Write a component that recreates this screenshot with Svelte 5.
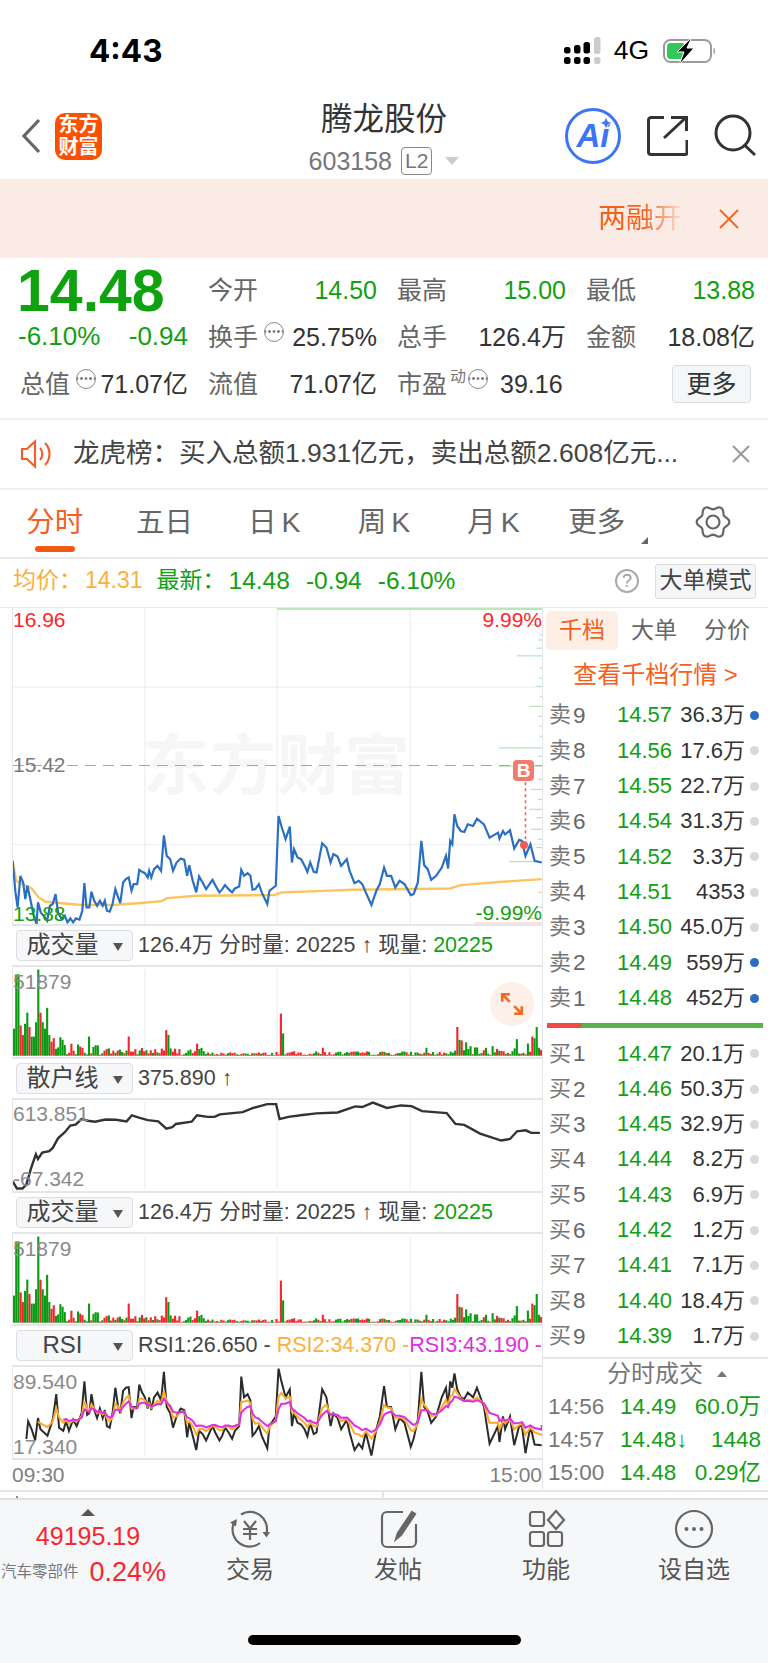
<script>
  // 盘口数据
  const sellRows = [
    ['卖', 9, '14.57', '36.3万', 1], ['卖', 8, '14.56', '17.6万', 0], ['卖', 7, '14.55', '22.7万', 0],
    ['卖', 6, '14.54', '31.3万', 0], ['卖', 5, '14.52', '3.3万', 0], ['卖', 4, '14.51', '4353', 0],
    ['卖', 3, '14.50', '45.0万', 0], ['卖', 2, '14.49', '559万', 1], ['卖', 1, '14.48', '452万', 1]
  ];
  const buyRows = [
    ['买', 1, '14.47', '20.1万', 0], ['买', 2, '14.46', '50.3万', 0], ['买', 3, '14.45', '32.9万', 0],
    ['买', 4, '14.44', '8.2万', 0], ['买', 5, '14.43', '6.9万', 0], ['买', 6, '14.42', '1.2万', 0],
    ['买', 7, '14.41', '7.1万', 0], ['买', 8, '14.40', '18.4万', 0], ['买', 9, '14.39', '1.7万', 0]
  ];
  const trades = [
    ['14:56', '14.49', '60.0万'], ['14:57', '14.48↓', '1448'], ['15:00', '14.48', '0.29亿']
  ];
  const tabs = ['分时', '五日', '日K', '周K', '月K', '更多'];

  // 曲线坐标（x, y 交替）
  const priceLine = [36,785,44,880,50,925,58,830,66,850,72,900,78,860,86,900,96,950,104,975,108,910,116,940,124,950,134,965,142,920,150,915,158,885,165,940,175,960,184,950,192,970,200,958,208,970,216,958,226,962,234,935,240,852,246,925,254,925,260,878,268,905,276,920,284,905,292,920,298,905,304,935,312,938,320,915,328,870,336,895,342,912,350,850,358,840,366,835,374,875,380,855,390,855,396,812,404,818,412,822,420,835,424,815,430,835,438,810,448,800,458,815,466,708,474,770,484,780,492,815,502,790,514,778,524,782,532,830,538,798,548,845,558,880,566,832,576,850,586,870,604,842,612,858,624,880,632,870,640,858,650,870,660,880,668,868,680,862,686,812,694,830,704,822,712,830,718,872,726,870,736,855,744,880,760,915,766,875,784,860,792,650,800,680,812,720,824,682,830,790,836,750,846,775,856,780,866,800,874,818,882,790,892,818,900,820,916,732,928,745,940,790,948,765,960,772,970,800,986,780,994,815,1008,852,1020,845,1030,855,1040,880,1056,918,1070,875,1080,855,1092,805,1100,830,1112,830,1124,865,1136,845,1150,855,1168,888,1176,885,1188,850,1198,725,1206,798,1216,810,1226,842,1240,830,1256,805,1268,770,1274,808,1280,725,1286,735,1292,645,1300,680,1310,695,1320,698,1330,675,1345,680,1356,658,1376,675,1392,715,1416,700,1420,718,1430,695,1436,705,1450,693,1462,748,1476,722,1484,725,1494,770,1508,735,1520,785,1540,790];
  const avgLine = [36,785,46,845,70,858,90,868,110,895,130,908,170,912,230,918,330,917,400,912,460,906,475,897,560,890,780,888,800,880,900,876,1000,872,1280,868,1310,858,1400,850,1540,840];
  const retailLine = [36,760,48,782,64,782,75,770,88,720,102,675,108,690,120,670,140,665,150,655,165,625,185,605,200,585,215,582,232,565,250,570,270,573,300,566,330,567,360,572,375,553,395,560,420,568,450,572,473,595,490,590,500,580,545,573,560,553,590,558,610,558,625,550,690,543,720,530,760,518,785,518,795,565,820,558,860,552,900,547,960,544,1010,525,1030,527,1060,513,1100,530,1140,522,1170,524,1200,540,1270,546,1295,580,1320,583,1365,610,1425,632,1450,627,1470,603,1495,600,1510,608,1535,608];
  const rsi1 = [75,720,80,665,90,690,100,725,108,655,115,690,135,710,150,660,160,580,168,685,180,695,188,665,196,695,208,660,218,680,232,640,240,540,248,645,254,640,260,580,268,630,276,655,284,625,292,655,298,630,304,680,312,685,320,640,328,560,336,620,342,640,350,570,358,560,366,558,374,655,380,620,390,620,396,550,404,575,412,590,420,625,424,590,430,630,438,590,448,575,458,600,466,510,474,620,484,640,492,685,502,650,514,625,524,630,532,715,538,670,548,710,558,755,566,695,576,705,586,725,604,680,612,700,624,725,632,710,640,685,650,700,660,720,668,695,680,680,686,525,694,590,704,580,712,600,718,710,726,700,736,680,744,710,760,750,766,680,784,650,792,500,800,540,812,590,824,565,830,680,836,640,846,670,856,675,866,690,874,712,882,670,892,705,900,700,916,565,928,590,940,680,948,640,960,655,970,690,986,660,994,700,1008,755,1020,735,1030,750,1040,700,1056,772,1070,690,1080,650,1092,555,1100,620,1112,620,1124,690,1136,655,1150,670,1168,745,1176,720,1188,660,1198,510,1206,620,1216,635,1226,670,1240,650,1256,590,1268,560,1274,620,1280,540,1286,560,1292,515,1300,565,1310,590,1320,595,1330,575,1345,590,1356,560,1376,620,1392,735,1416,680,1420,730,1430,650,1436,690,1450,650,1462,740,1476,680,1484,680,1494,765,1508,680,1520,738,1540,740];

  function toPoints(flat) {
    let s = '';
    for (let i = 0; i < flat.length; i += 2) s += flat[i] + ',' + flat[i + 1] + ' ';
    return s;
  }

  // RSI2 / RSI3 由 RSI1 平滑得到
  function smooth(flat, k, scale, startX, endY) {
    const out = [];
    let v = 640;
    for (let i = 0; i < flat.length; i += 2) {
      v = v + (flat[i + 1] - v) * k;
      if (flat[i] >= startX) out.push(flat[i], Math.round(640 + (v - 640) * scale));
    }
    out.push(1540, endY);
    return out;
  }
  const rsi2 = smooth(rsi1, 0.6, 0.72, 108, 710);
  const rsi3 = smooth(rsi1, 0.34, 0.62, 170, 677);

  // 成交量柱，峰值手工指定，其余按区段取伪随机
  const peaks = { 38: [85,'g'], 44: [255,'g'], 50: [255,'g'], 56: [95,'r'], 62: [65,'r'], 68: [100,'g'], 74: [135,'g'], 80: [90,'r'], 88: [60,'g'], 94: [60,'g'], 100: [105,'g'], 106: [270,'g'], 112: [135,'r'], 118: [105,'g'], 124: [85,'g'], 130: [150,'g'], 136: [65,'g'], 148: [55,'r'], 168: [58,'g'], 176: [50,'g'], 250: [60,'g'], 362: [60,'r'], 468: [80,'r'], 476: [65,'g'], 558: [38,'r'], 794: [132,'r'], 800: [70,'g'], 912: [25,'r'], 1208: [25,'g'], 1296: [90,'r'], 1304: [50,'g'], 1312: [48,'r'], 1320: [42,'g'], 1332: [30,'g'], 1396: [30,'g'], 1464: [52,'g'], 1498: [38,'g'], 1508: [60,'r'], 1514: [55,'g'], 1522: [90,'g'], 1540: [105,'r'] };
  const peakIndex = {};
  for (const key of Object.keys(peaks)) peakIndex[Math.round((key - 37) / 6.27)] = peaks[key];

  let seed = 7;
  function rnd() {
    seed = (seed * 1103515245 + 12345) % 2147483648;
    return seed / 2147483648;
  }
  function envelope(x) {
    if (x < 150) return 70;
    if (x < 300) return 36;
    if (x < 580) return 24;
    if (x < 780) return 9;
    if (x < 1160) return 12;
    if (x < 1290) return 11;
    return 24;
  }
  const bars = [];
  for (let i = 0; i < 241; i++) {
    const x = 37 + i * 6.27;
    const p = peakIndex[i];
    const h = p ? p[0] : 2 + rnd() * envelope(x);
    const side = p ? p[1] : rnd() > 0.5 ? 'g' : 'r';
    bars.push({ x, h, side });
  }

  // 右侧分价柱
  const depth = [[28,1440],[75,1500],[105,1535],[120,1530],[145,1525],[168,1470],[205,1534],[235,1534],[260,1525],[290,1535],[320,1505],[350,1530],[380,1534],[410,1534],[445,1418],[470,1530],[500,1420],[540,1530],[570,1510],[600,1530],[630,1505],[655,1525],[690,1510],[720,1530],[745,1525],[787,1447]];

  // 设置图标的花瓣轮廓
  let gearPath = '';
  for (let i = 0; i <= 96; i++) {
    const t = (i / 96) * Math.PI * 2;
    const r = 14.5 - 1.8 * Math.cos(6 * t);
    gearPath += (i ? 'L' : 'M') + (18 + r * Math.sin(t)).toFixed(2) + ' ' + (18 - r * Math.cos(t)).toFixed(2);
  }
  gearPath += 'Z';
</script>

{#snippet gridLines(y1, y2)}
  <line class="grid" x1="412" x2="412" {y1} {y2} />
  <line class="grid" x1="788" x2="788" {y1} {y2} />
  <line class="grid" x1="1166" x2="1166" {y1} {y2} />
{/snippet}

{#snippet picker(name)}
  <div class="picker"><span>{name}</span><i class="tri-down"></i></div>
{/snippet}

{#snippet volumeBar()}
  <div class="ind-bar">
    {@render picker('成交量')}
    <span class="ind-text">126.4万 分时量: 20225 ↑ 现量: <em class="up">20225</em></span>
  </div>
{/snippet}

{#snippet volumeChart(showExpand)}
  <div class="chart vol">
    <svg viewBox="37 105 1504 282" preserveAspectRatio="none">
      {@render gridLines(112, 383)}
      {#each bars as b}
        <rect x={b.x} y={383 - b.h} width="6" height={b.h} fill={b.side === 'g' ? '#0c9a12' : '#f4262d'} />
      {/each}
    </svg>
    <span class="tag grey" style="top:3px">51879</span>
    {#if showExpand}
      <div class="expand">
        <svg viewBox="0 0 24 24" width="26" height="26">
          <path d="M3 10V3h7M3 3l7 7M21 14v7h-7M21 21l-7-7" fill="none" stroke="#f5691f" stroke-width="2.4" />
        </svg>
      </div>
    {/if}
  </div>
{/snippet}

<div class="page">
  <div class="status">
    <span class="clock">4:43</span>
    <div class="status-right">
      <svg width="40" height="28" viewBox="0 0 40 28">
        <rect x="1" y="10" width="6.500" height="6.500" rx="2.500" />
        <rect x="11" y="8" width="6.500" height="8.500" rx="2.500" />
        <rect x="20.500" y="5" width="6.500" height="11.500" rx="2.500" />
        <rect x="31" y="0" width="6.500" height="17" rx="2.500" fill="#ccc" />
        <rect x="1" y="20" width="6.500" height="7" rx="2.500" />
        <rect x="11" y="20" width="6.500" height="7" rx="2.500" />
        <rect x="20.500" y="20" width="6.500" height="7" rx="2.500" />
        <rect x="31" y="20" width="6.500" height="7" rx="2.500" fill="#ccc" />
      </svg>
      <span class="net">4G</span>
      <svg width="54" height="28" viewBox="0 0 54 28">
        <rect x="1" y="3" width="47" height="22" rx="6.500" fill="none" stroke="#9a9a9a" stroke-width="2" />
        <rect x="4" y="6" width="18" height="16" rx="3.500" fill="#34c759" />
        <path d="M50.500 10.500c2 .6 2 6.400 0 7z" fill="#9a9a9a" />
        <path d="M29 0 14 15h7l-5 13 15-17h-7z" fill="#000" stroke="#fff" stroke-width="1" />
      </svg>
    </div>
  </div>

  <div class="nav">
    <div class="nav-left">
      <svg width="20" height="36" viewBox="0 0 20 36"><path d="M18 2 3 18l15 16" fill="none" stroke="#666" stroke-width="3.200" /></svg>
      <div class="logo">东方<br />财富</div>
    </div>
    <div class="nav-title">
      <div class="name">腾龙股份</div>
      <div class="code">603158<span class="l2">L2</span><i class="tri-light"></i></div>
    </div>
    <div class="nav-right">
      <div class="ai">Ai<svg class="spark" viewBox="0 0 10 10" width="12" height="12"><path d="M5 0 6.500 3.500 10 5 6.500 6.500 5 10 3.500 6.500 0 5 3.500 3.500z" fill="#3d74f5" stroke="#fff" stroke-width=".5" /></svg></div>
      <svg width="41" height="40" viewBox="0 0 41 40" fill="none" stroke="#333" stroke-width="3">
        <path d="M17 1.500H4a2.500 2.500 0 0 0-2.500 2.500v32A2.500 2.500 0 0 0 4 38.500h34a2 2 0 0 0 2-2V24" />
        <path d="M17 22 39 1.500M24 1.500h15.500V15" />
      </svg>
      <svg width="42" height="44" viewBox="0 0 42 44" fill="none" stroke="#333" stroke-width="3">
        <circle cx="19" cy="19" r="17" />
        <path d="M31 31.500 41 41" />
      </svg>
    </div>
  </div>

  <div class="banner">
    <span class="banner-text">两融开户</span>
    <svg width="20" height="20" viewBox="0 0 20 20"><path d="M1 1 19 19M19 1 1 19" stroke="#f2682a" stroke-width="2" /></svg>
  </div>

  <div class="quote">
    <div class="last">14.48</div>
    <div class="cell"><span class="lbl">今开</span><span class="up">14.50</span></div>
    <div class="cell"><span class="lbl">最高</span><span class="up">15.00</span></div>
    <div class="cell"><span class="lbl">最低</span><span class="up">13.88</span></div>

    <div class="cell delta up"><span>-6.10%</span><span>-0.94</span></div>
    <div class="cell"><span class="lbl">换手<i class="more-dot"></i></span><span>25.75%</span></div>
    <div class="cell"><span class="lbl">总手</span><span>126.4万</span></div>
    <div class="cell"><span class="lbl">金额</span><span>18.08亿</span></div>

    <div class="cell"><span class="lbl">总值<i class="more-dot"></i></span><span>71.07亿</span></div>
    <div class="cell"><span class="lbl">流值</span><span>71.07亿</span></div>
    <div class="cell pe"><span class="lbl">市盈<sup>动</sup><i class="more-dot tight"></i></span><span>39.16</span></div>
    <div class="cell end"><button class="more-btn">更多</button></div>
  </div>

  <div class="notice">
    <svg width="33" height="30" viewBox="0 0 33 30" fill="none" stroke="#f0602a" stroke-width="2.200">
      <path d="M2 10h5l8-7.500v25L7 20H2z" />
      <path d="M20 9c3 3 3 9 0 12M25 4c6 6 6 16 0 22" />
    </svg>
    <span class="notice-text">龙虎榜：买入总额1.931亿元，卖出总额2.608亿元...</span>
    <svg width="18" height="18" viewBox="0 0 18 18"><path d="M1 1 17 17M17 1 1 17" stroke="#999" stroke-width="2" /></svg>
  </div>

  <div class="tabs">
    {#each tabs as t, i}
      <div class="tab" class:on={i === 0} class:k={t.endsWith('K')} class:last-tab={i === 5}>
        {t}
        {#if i === 5}<i class="corner"></i>{/if}
      </div>
    {/each}
    <div class="tab">
      <svg width="36" height="36" viewBox="0 0 36 36" fill="none" stroke="#666" stroke-width="2.200">
        <path d={gearPath} />
        <circle cx="18" cy="18" r="6.500" />
      </svg>
    </div>
  </div>

  <div class="info">
    <span class="avg">均价：</span><span class="avg gap-s">14.31</span>
    <span class="up gap-l">最新：</span><span class="up gap-s wide">14.48</span>
    <span class="up gap-m wide">-0.94</span>
    <span class="up gap-m wide">-6.10%</span>
    <span class="help">?</span>
    <button class="mode">大单模式</button>
  </div>

  <div class="panel">
    <div class="left">
      <div class="chart main">
        <svg viewBox="37 24 1504 951" preserveAspectRatio="none">
          {@render gridLines(24, 975)}
          <line class="grid" x1="37" x2="1541" y1="262" y2="262" />
          <line class="grid" x1="37" x2="1541" y1="735" y2="735" />
          <line class="top-green" x1="788" x2="1541" y1="27" y2="27" />
          {#each depth as d}
            <line class="depth" x1={d[1]} x2="1541" y1={d[0]} y2={d[0]} />
          {/each}
          <line class="depth-red" x1="1350" x2="1541" y1="972" y2="972" />
          <line class="depth-red" x1="1500" x2="1541" y1="958" y2="958" />
          <line class="depth-red" x1="1530" x2="1541" y1="925" y2="925" />
          <line class="depth-red" x1="1530" x2="1541" y1="880" y2="880" />
          <line class="dash" x1="37" x2="1541" y1="498" y2="498" />
          <polyline class="avg-line" points={toPoints(avgLine)} />
          <polyline class="price-line" points={toPoints(priceLine)} />
          <line class="b-link" x1="1494" x2="1494" y1="530" y2="735" />
        </svg>
        <div class="watermark">东方财富</div>
        <span class="tag red" style="top:0">16.96</span>
        <span class="tag red rt" style="top:0">9.99%</span>
        <span class="tag dim" style="top:145px">15.42</span>
        <span class="tag up" style="top:294px">13.88</span>
        <span class="tag up rt" style="top:293px">-9.99%</span>
        <div class="b-mark">B</div>
        <i class="b-dot"></i>
      </div>

      {@render volumeBar()}
      {@render volumeChart(true)}

      <div class="ind-bar">
        {@render picker('散户线')}
        <span class="ind-text">375.890 ↑</span>
      </div>
      <div class="chart line">
        <svg viewBox="37 505 1504 285" preserveAspectRatio="none">
          {@render gridLines(510, 785)}
          <polyline class="retail" points={toPoints(retailLine)} />
        </svg>
        <span class="tag grey" style="top:2px">613.851</span>
        <span class="tag grey" style="top:67px">-67.342</span>
      </div>

      {@render volumeBar()}
      {@render volumeChart(false)}

      <div class="ind-bar">
        {@render picker('RSI')}
        <span class="ind-text nowrap">RSI1:26.650 - <em class="r2">RSI2:34.370 - </em><em class="r3">RSI3:43.190 -</em></span>
      </div>
      <div class="chart line">
        <svg viewBox="37 495 1504 285" preserveAspectRatio="none">
          {@render gridLines(500, 775)}
          <polyline class="rsi r-black" points={toPoints(rsi1)} />
          <polyline class="rsi r-orange" points={toPoints(rsi2)} />
          <polyline class="rsi r-pink" points={toPoints(rsi3)} />
        </svg>
        <span class="tag grey" style="top:3px">89.540</span>
        <span class="tag grey" style="top:68px">17.340</span>
      </div>
      <div class="axis"><span>09:30</span><span>15:00</span></div>
    </div>

    <div class="right">
      <div class="side-tabs">
        <span class="side-on">千档</span><span>大单</span><span>分价</span>
      </div>
      <div class="deep-link">查看千档行情 &gt;</div>
      {#each sellRows as r}
        <div class="row">
          <span class="side">{r[0]}</span><span class="num">{r[1]}</span>
          <span class="price up">{r[2]}</span><span class="qty">{r[3]}</span>
          <i class="dot" class:blue={r[4]}></i>
        </div>
      {/each}
      <div class="ratio"><div class="ratio-bar"></div></div>
      {#each buyRows as r}
        <div class="row">
          <span class="side">{r[0]}</span><span class="num">{r[1]}</span>
          <span class="price up">{r[2]}</span><span class="qty">{r[3]}</span>
          <i class="dot"></i>
        </div>
      {/each}
      <div class="ticks-head">分时成交<i class="tri-up"></i></div>
      {#each trades as t}
        <div class="tick">
          <span class="tick-time">{t[0]}</span><span class="tick-price up">{t[1]}</span><span class="tick-qty up">{t[2]}</span>
        </div>
      {/each}
    </div>
  </div>

  <div class="peek"><i class="peek-dot"></i></div>

  <div class="bottom">
    <div class="sector">
      <i class="tri-up dark"></i>
      <div class="sector-val">49195.19</div>
      <div class="sector-row"><span class="sector-name">汽车零部件</span><span class="sector-pct">0.24%</span></div>
    </div>
    <div class="tool">
      <svg width="42" height="40" viewBox="0 0 42 40" fill="none" stroke="#666" stroke-width="2.200">
        <path d="M12 5.500A17 17 0 0 1 37.500 24" />
        <path d="M33.500 23h7.500l-3.500 5.500z" fill="#666" stroke="none" />
        <path d="M31 34A17 17 0 0 1 4.500 15" />
        <path d="M1 13.500 8 10l-1 7.500z" fill="#666" stroke="none" />
        <path d="M15 12l6 7.500 6-7.500M14 20h14M14 25h14M21 19.500V31" />
      </svg>
      <span>交易</span>
    </div>
    <div class="tool">
      <svg width="40" height="40" viewBox="0 0 40 40" fill="none" stroke="#666" stroke-width="2.200">
        <path d="M25 3H9a5 5 0 0 0-5 5v25a5 5 0 0 0 5 5h24a5 5 0 0 0 5-5V15" />
        <path d="M34 3 20 24l-2 6 5-4L37 5z" fill="#666" />
      </svg>
      <span>发帖</span>
    </div>
    <div class="tool">
      <svg width="40" height="40" viewBox="0 0 40 40" fill="none" stroke="#666" stroke-width="2.200">
        <rect x="4" y="3" width="14" height="14" rx="2.500" />
        <path d="M30 2l8 9-8 9-8-9z" />
        <rect x="4" y="23" width="14" height="14" rx="2.500" />
        <rect x="22" y="23" width="14" height="14" rx="2.500" />
      </svg>
      <span>功能</span>
    </div>
    <div class="tool">
      <svg width="40" height="40" viewBox="0 0 40 40">
        <circle cx="20" cy="20" r="18" fill="none" stroke="#666" stroke-width="2.200" />
        <circle cx="12.500" cy="20" r="2" fill="#666" /><circle cx="20" cy="20" r="2" fill="#666" /><circle cx="27.500" cy="20" r="2" fill="#666" />
      </svg>
      <span>设自选</span>
    </div>
    <div class="home"></div>
  </div>
</div>

<style>
  :global(body) {
    margin: 0;
    background: #fff;
  }

  .page {
    width: 768px;
    height: 1663px;
    overflow: hidden;
    position: relative;
    font-family: "Liberation Sans", "Noto Sans CJK SC", sans-serif;
    line-height: 1.2;
    color: #333;
  }

  i, em { font-style: normal; }
  .up { color: #12a012; }
  button { font-family: inherit; line-height: 1.2; }

  .status {
    height: 88px;
    padding: 7px 51px 0 89px;
    display: flex;
    align-items: center;
    justify-content: space-between;
  }
  .clock {
    font-family: "Inter", sans-serif;
    font-weight: 700;
    font-size: 31.500px;
    color: #000;
  }
  .status-right {
    display: flex;
    align-items: center;
    gap: 11px;
  }
  .net {
    font-size: 26.500px;
    color: #000;
    margin-right: 3px;
  }

  .nav {
    height: 84px;
    display: grid;
    grid-template-columns: 1fr auto 1fr;
  }
  .nav-left {
    display: flex;
    align-items: center;
    gap: 14px;
    padding-left: 21px;
    height: 82px;
  }
  .logo {
    width: 47px;
    height: 47px;
    background: #fb5000;
    border-radius: 10px;
    color: #fff;
    font-size: 20px;
    font-weight: 700;
    line-height: 22px;
    text-align: center;
    padding-top: 1px;
    box-sizing: border-box;
  }
  .nav-title {
    text-align: center;
    padding-top: 5px;
  }
  .name {
    font-size: 31.500px;
    line-height: 38px;
    color: #333;
  }
  .code {
    display: flex;
    align-items: center;
    justify-content: center;
    margin-top: 8px;
    font-size: 25px;
    height: 30px;
    color: #777;
  }
  .l2 {
    border: 1px solid #888;
    border-radius: 4px;
    font-size: 21px;
    line-height: 26px;
    padding: 0 3px;
    margin-left: 9px;
  }
  .tri-light {
    width: 0;
    height: 0;
    border-left: 7px solid transparent;
    border-right: 7px solid transparent;
    border-top: 8px solid #ccc;
    margin-left: 13px;
  }
  .nav-right {
    display: flex;
    align-items: center;
    justify-content: flex-end;
    gap: 26px;
    padding-right: 12px;
    height: 82px;
  }
  .ai {
    position: relative;
    width: 56px;
    height: 56px;
    box-sizing: border-box;
    border: 3.500px solid #3d74f5;
    border-radius: 50%;
    color: #3d74f5;
    font-size: 33px;
    font-weight: 700;
    font-style: italic;
    line-height: 49px;
    text-align: center;
  }
  .spark {
    position: absolute;
    right: 6px;
    top: 6px;
  }

  .banner {
    height: 78px;
    border-top: 1px solid #ececec;
    background: #fbebe5;
    display: flex;
    align-items: center;
    justify-content: flex-end;
    gap: 31px;
    padding-right: 29px;
  }
  .banner-text {
    width: 90px;
    overflow: hidden;
    white-space: nowrap;
    font-size: 28px;
    background: linear-gradient(90deg, #f2621c 50%, #fbebe5 98%);
    -webkit-background-clip: text;
    background-clip: text;
    color: transparent;
  }

  .quote {
    height: 160px;
    box-sizing: border-box;
    padding: 8px 13px 0 20px;
    display: grid;
    grid-template-columns: 168px repeat(3, 169px);
    grid-auto-rows: 47px;
    column-gap: 20px;
    font-size: 25px;
  }
  .last {
    font-size: 59px;
    font-weight: 700;
    color: #0ea30e;
    line-height: 52px;
    margin-left: -3px;
    margin-top: -1px;
  }
  .cell {
    display: flex;
    align-items: center;
    justify-content: space-between;
    white-space: nowrap;
  }
  .end { justify-content: flex-end; padding-right: 4px; }
  .pe { justify-content: flex-start; }
  .pe > span:last-child { margin-left: 12px; }
  .lbl {
    color: #666;
    display: inline-flex;
    align-items: center;
    position: relative;
  }
  .lbl sup {
    font-size: 16px;
    line-height: 16px;
    align-self: flex-start;
    margin: 0 0 0 3px;
    color: #777;
  }
  .delta { font-size: 26px; margin-left: -2px; }
  .more-dot {
    width: 20px;
    height: 20px;
    box-sizing: border-box;
    border: 1.500px solid #888;
    border-radius: 50%;
    margin-left: 6px;
    margin-top: -10px;
    position: relative;
    background: radial-gradient(circle, #777 1.100px, transparent 1.400px) center / 4.500px 4.500px repeat-x;
  }
  .more-dot.tight { margin-left: 2px; }
  .more-btn {
    width: 79px;
    height: 38px;
    background: #f5f6f7;
    border: 1px solid #dcdde0;
    border-radius: 4px;
    font-size: 25px;
    color: #333;
    padding: 0;
  }

  .notice {
    height: 68px;
    border-top: 2px solid #efefef;
    border-bottom: 2px solid #efefef;
    display: flex;
    align-items: center;
    padding: 0 18px 0 20px;
  }
  .notice-text {
    flex: 1;
    margin-left: 20px;
    font-size: 26.500px;
    color: #444;
    white-space: nowrap;
  }

  .tabs {
    height: 67px;
    border-bottom: 2px solid #e8e8ea;
    display: grid;
    grid-template-columns: repeat(7, 109.700px);
  }
  .tab {
    display: flex;
    align-items: center;
    justify-content: center;
    font-size: 28.500px;
    color: #666;
    position: relative;
    height: 64px;
  }
  .tab.k { letter-spacing: 5px; padding-left: 5px; }
  .last-tab { padding-right: 13px; }
  .tab.on { color: #f4601d; }
  .tab.on::after {
    content: '';
    position: absolute;
    left: 35px;
    width: 40px;
    height: 6px;
    top: 56px;
    border-radius: 3px;
    background: #f05a14;
  }
  .corner {
    position: absolute;
    right: 10px;
    bottom: 10px;
    width: 0;
    height: 0;
    border-left: 7px solid transparent;
    border-bottom: 7px solid #666;
  }

  .info {
    height: 44px;
    padding-bottom: 4px;
    display: flex;
    align-items: center;
    padding-left: 13px;
    padding-right: 12px;
    font-size: 23px;
    white-space: nowrap;
  }
  .avg { color: #fbb03b; }
  .wide { font-size: 24.500px; }
  .gap-s { margin-left: 3px; }
  .gap-l { margin-left: 14px; }
  .gap-m { margin-left: 16px; }
  .help {
    margin-left: auto;
    width: 24px;
    height: 24px;
    box-sizing: border-box;
    border: 2px solid #aaa;
    border-radius: 50%;
    color: #999;
    font-size: 18px;
    line-height: 20px;
    text-align: center;
  }
  .mode {
    margin-left: 16px;
    width: 101px;
    height: 35px;
    padding: 0;
    background: #f5f6f7;
    border: 1px solid #dcdde0;
    border-radius: 3px;
    font-size: 23px;
    color: #444;
  }

  .panel {
    height: 882px;
    border-top: 1px solid #e6e8ee;
    display: flex;
  }
  .left {
    width: 542px;
    box-sizing: border-box;
    padding-left: 12px;
  }
  .right {
    width: 226px;
    box-sizing: border-box;
    border-left: 1px solid #e3e5ea;
    height: 882px;
  }

  .chart {
    position: relative;
    box-sizing: border-box;
    border-left: 1px solid #e6e8ee;
    border-bottom: 2px solid #e4e6ec;
  }
  .chart svg { display: block; width: 100%; height: 100%; }
  .chart polyline, .chart line { vector-effect: non-scaling-stroke; fill: none; }
  .main { height: 318px; }
  .vol { height: 94px; border-top: 2px solid #e4e6ec; }
  .line { height: 95px; border-top: 2px solid #e4e6ec; }

  .grid { stroke: #e8eaf2; stroke-width: 1; }
  .top-green { stroke: #bde6bd; stroke-width: 2; }
  .depth { stroke: #b9e3b9; stroke-width: 1.200; }
  .depth-red { stroke: #f9c4c4; stroke-width: 1.200; }
  .dash { stroke: #a6a6a6; stroke-width: 1.200; stroke-dasharray: 11 7; }
  .avg-line { stroke: #fdc45e; stroke-width: 2.400; }
  .price-line { stroke: #2a6fc2; stroke-width: 2.200; }
  .b-link { stroke: #f0625a; stroke-width: 1.600; stroke-dasharray: 3 3; }
  .retail { stroke: #333; stroke-width: 2.400; }
  .rsi { stroke-width: 2; }
  .r-black { stroke: #2b2b2b; }
  .r-orange { stroke: #fbaa2c; }
  .r-pink { stroke: #e02fe0; }

  .tag {
    position: absolute;
    left: 0;
    font-size: 21px;
    line-height: 24px;
  }
  .tag.rt { left: auto; right: 0; }
  .red { color: #f8272c; }
  .grey { color: #8a8a8a; }
  .dim { color: #7a7a7a; }

  .watermark {
    position: absolute;
    left: 130px;
    top: 122px;
    font-size: 66px;
    line-height: 72px;
    font-weight: 700;
    letter-spacing: 1px;
    color: #f6f6f6;
    z-index: -1;
  }
  .b-mark {
    position: absolute;
    left: 500px;
    top: 152px;
    width: 21px;
    height: 21px;
    border-radius: 4px;
    background: #f37a6c;
    color: #fff;
    font-size: 19px;
    font-weight: 700;
    line-height: 21px;
    text-align: center;
  }
  .b-dot {
    position: absolute;
    left: 507px;
    top: 233px;
    width: 8px;
    height: 8px;
    border-radius: 50%;
    background: #ef5b58;
  }

  .ind-bar {
    height: 39px;
    box-sizing: border-box;
    display: flex;
    align-items: center;
    padding-left: 4px;
  }
  .picker {
    width: 117px;
    height: 31px;
    box-sizing: border-box;
    background: #f6f7f9;
    border: 1px solid #dcdee2;
    border-radius: 4px;
    display: flex;
    align-items: center;
    font-size: 24px;
    color: #444;
    padding-left: 8px;
    position: relative;
  }
  .picker span { width: 75px; text-align: center; }
  .tri-down {
    position: absolute;
    left: 96px;
    top: 12px;
    border-left: 5px solid transparent;
    border-right: 5px solid transparent;
    border-top: 8px solid #555;
  }
  .ind-text {
    margin-left: 5px;
    font-size: 21.500px;
    color: #444;
    white-space: nowrap;
  }
  .ind-text .up { color: #12a012; }
  .r2 { color: #fbb03b; }
  .r3 { color: #e02fe0; }

  .expand {
    position: absolute;
    left: 477px;
    top: 15px;
    width: 44px;
    height: 44px;
    border-radius: 50%;
    background: #fdf0e8;
    display: flex;
    align-items: center;
    justify-content: center;
  }
  .chart .expand svg { width: 26px; height: 26px; }

  .axis {
    height: 30px;
    display: flex;
    justify-content: space-between;
    align-items: center;
    font-size: 21px;
    color: #808080;
  }

  .side-tabs {
    margin-top: 3px;
    height: 39px;
    display: grid;
    grid-template-columns: 72px 72px 74px;
    margin-left: 3px;
    font-size: 23px;
    color: #666;
    text-align: center;
    line-height: 39px;
  }
  .side-on {
    background: #fdeee6;
    color: #f4601d;
    border-radius: 5px;
  }
  .deep-link {
    margin-top: 2px;
    height: 46px;
    line-height: 46px;
    text-align: center;
    font-size: 24px;
    color: #f4601d;
  }
  .row {
    height: 35.300px;
    display: flex;
    align-items: center;
    font-size: 22px;
    position: relative;
  }
  .side { width: 24px; margin-left: 6px; color: #777; }
  .num { width: 44px; color: #666; font-size: 22.500px; }
  .price { width: 54px; text-align: right; margin-left: 0; }
  .qty { width: 74px; text-align: right; color: #333; white-space: nowrap; }
  .dot {
    width: 9px;
    height: 9px;
    border-radius: 50%;
    background: #d6d9de;
    margin-left: 5px;
  }
  .dot.blue { background: #2c6dc4; }
  .ratio {
    height: 20.400px;
    display: flex;
    align-items: center;
    padding: 0 5px 0 4px;
  }
  .ratio-bar {
    width: 100%;
    height: 5px;
    background: linear-gradient(102deg, #ee4b45 16%, #59b34a 16.500%);
  }
  .ticks-head {
    margin-top: 3px;
    border-top: 2px solid #e6e6e6;
    height: 31px;
    display: flex;
    align-items: center;
    padding-left: 64px;
    font-size: 24px;
    color: #777;
  }
  .tri-up {
    border-left: 5.500px solid transparent;
    border-right: 5.500px solid transparent;
    border-bottom: 6px solid #777;
    margin-left: 14px;
  }
  .tick {
    height: 33px;
    display: flex;
    align-items: center;
    font-size: 22.500px;
    padding-left: 5px;
    white-space: nowrap;
  }
  .tick-time { width: 72px; color: #777; }
  .tick-price { width: 74px; }
  .tick-qty { width: 67px; text-align: right; }

  .peek {
    height: 6px;
    border-top: 2px solid #e6e6e6;
    background: linear-gradient(#e6e6e6, #e6e6e6) 382px 0 / 2px 100% no-repeat;
    position: relative;
  }
  .peek-dot {
    position: absolute;
    left: 16px;
    top: 4px;
    width: 2px;
    height: 2px;
    background: #888;
  }

  .bottom {
    position: relative;
    height: 165px;
    border-top: 2px solid #dfe2e5;
    box-sizing: border-box;
    background: #f6f7f9;
    display: grid;
    grid-template-columns: 176px repeat(4, 148px);
  }
  .sector {
    display: flex;
    flex-direction: column;
    align-items: center;
  }
  .tri-up.dark {
    margin: 9px 0 0;
    border-left-width: 7px;
    border-right-width: 7px;
    border-bottom: 7px solid #555;
  }
  .sector-val {
    font-size: 25px;
    color: #f8272c;
    line-height: 30px;
    margin-top: 5px;
  }
  .sector-row {
    display: flex;
    align-items: center;
    width: 100%;
    margin-top: 5px;
  }
  .sector-name {
    font-size: 15.500px;
    color: #777;
    margin-left: 1px;
    white-space: nowrap;
  }
  .sector-pct {
    font-size: 27px;
    color: #f8272c;
    margin-left: 11px;
  }
  .tool {
    display: flex;
    flex-direction: column;
    align-items: center;
    padding-top: 9px;
    font-size: 24px;
    color: #555;
  }
  .tool span { margin-top: 3px; line-height: 36px; }
  .home {
    position: absolute;
    left: 248px;
    top: 135px;
    width: 273px;
    height: 10px;
    border-radius: 5px;
    background: #000;
  }
</style>
